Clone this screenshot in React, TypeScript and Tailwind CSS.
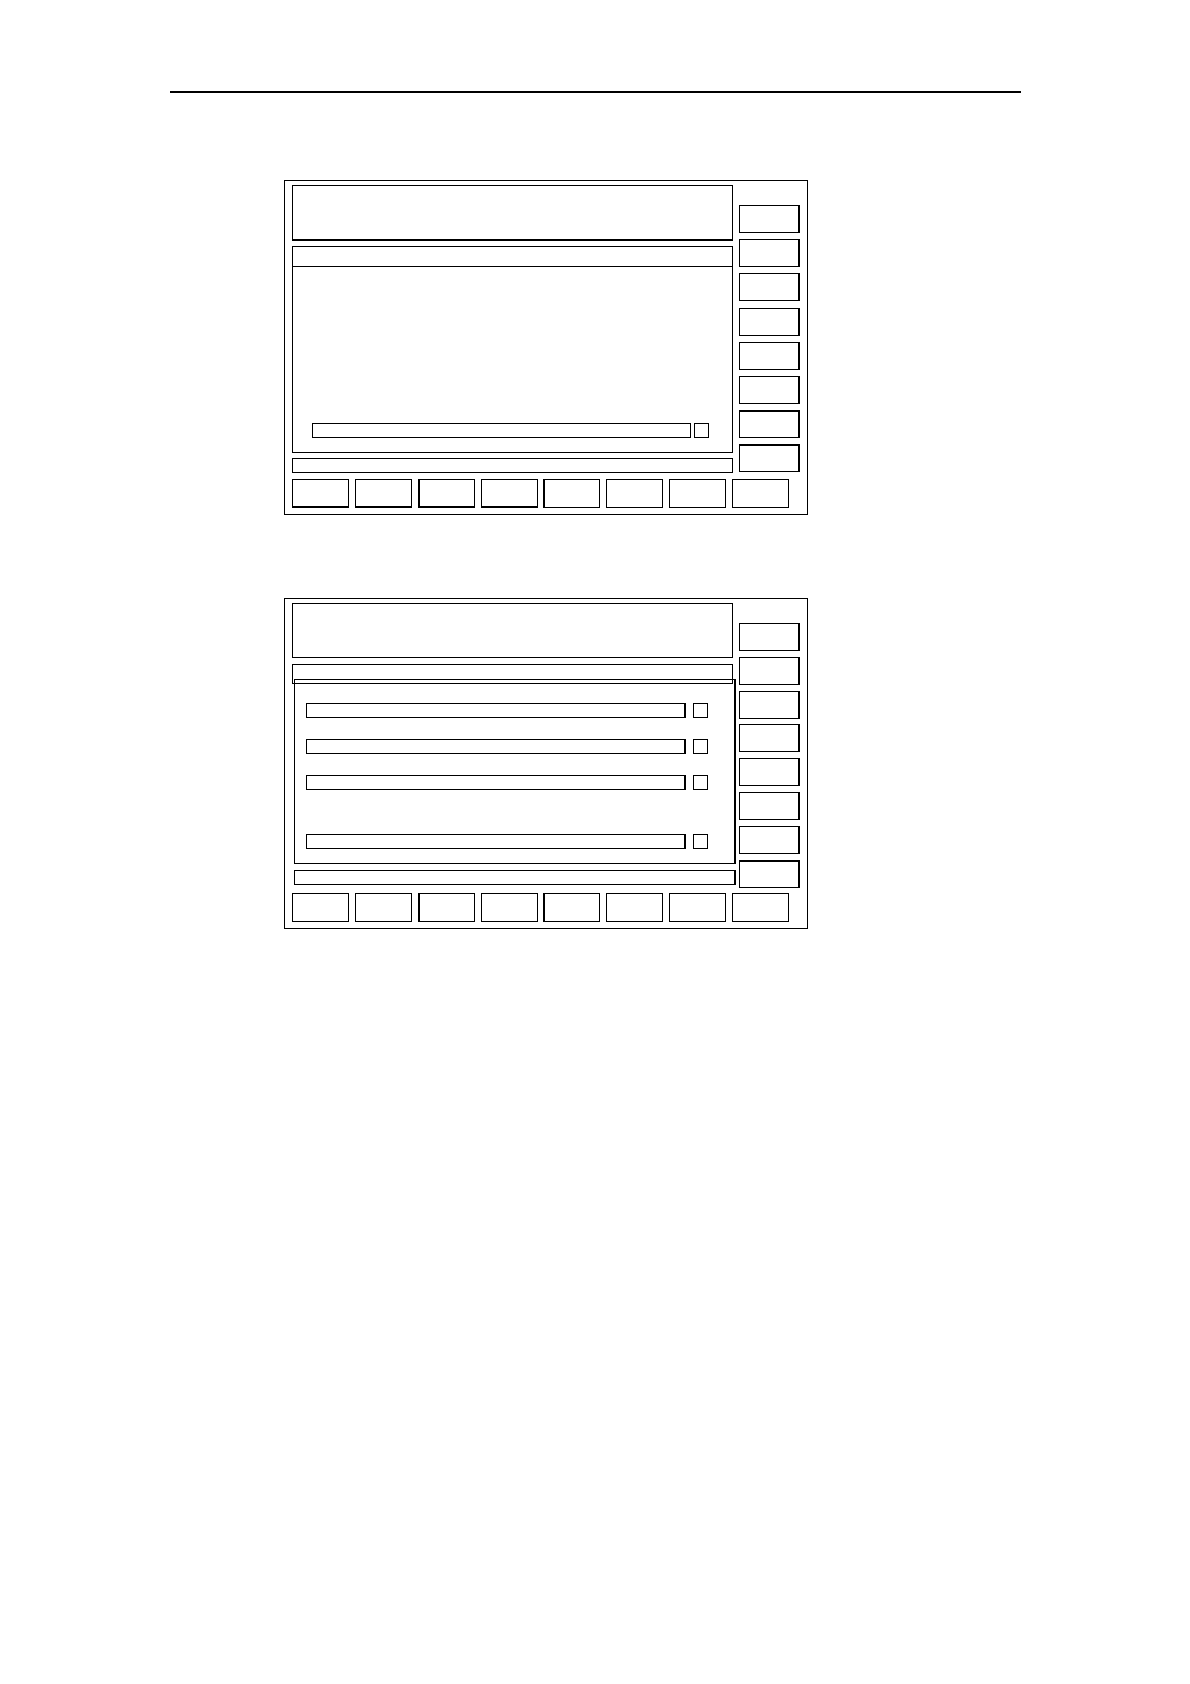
const rightBtnExtra1 = ['', '', '', '', '', '', 'border-t-2', 'border-t-2'];
const bottomBtnExtra1 = ['border-b-2', 'border-b-2', 'border-l-2 border-b-2', 'border-b-2', 'border-l-2', '', '', ''];
const bottomBtnExtra2 = ['', '', 'border-l-2', '', 'border-l-2', '', '', ''];

function RightButtons({ extra, gap }: { extra: string[]; gap: string }) {
  return (
    <div className={`mt-[20px] flex w-[61px] flex-col ${gap}`}>
      {extra.map((x, i) => (
        <div key={i} className={`h-[28px] w-[61px] border border-r-2 border-black ${x}`} />
      ))}
    </div>
  );
}

function BottomButtons({ extra, className }: { extra: string[]; className: string }) {
  return (
    <div className={`flex gap-[5.85px] ${className}`}>
      {extra.map((x, i) => (
        <div key={i} className={`h-[29px] w-[57px] border border-black ${x}`} />
      ))}
    </div>
  );
}

function Slot({ gap }: { gap: string }) {
  return (
    <div className={`ml-[11px] flex items-center gap-[7px] ${gap}`}>
      <div className="h-[15px] w-[380px] border border-r-2 border-black" />
      <div className="h-[15px] w-[15px] border border-black" />
    </div>
  );
}

function PanelOne() {
  return (
    <div className="ml-[284px] mt-[87.5px] h-[335px] w-[524px] border border-black pl-[7px] pt-[4px]">
      <div className="flex items-start gap-[6px]">
        <div className="flex w-[441px] flex-col">
          <div className="h-[56px] border border-b-2 border-black" />
          <div className="mt-[5px] flex h-[207px] flex-col border border-black">
            <div className="h-[20px] border-b border-black" />
            <div className="flex flex-1 items-end pb-[14px] pl-[19px]">
              <div className="flex items-center gap-[3px]">
                <div className="h-[15px] w-[379px] border border-black" />
                <div className="h-[15px] w-[15px] border border-black" />
              </div>
            </div>
          </div>
          <div className="mt-[5px] h-[15px] border border-black" />
        </div>
        <RightButtons extra={rightBtnExtra1} gap="gap-[6.2px]" />
      </div>
      <BottomButtons extra={bottomBtnExtra1} className="mt-[6px]" />
    </div>
  );
}

function PanelTwo() {
  return (
    <div className="ml-[284px] mt-[83px] h-[331px] w-[524px] border border-black pl-[7px] pt-[4px]">
      <div className="flex items-start gap-[6px]">
        <div className="flex w-[441px] flex-col">
          <div className="h-[55px] border border-black" />
          <div className="mt-[6px] h-[20px] border border-black" />
          <div className="relative z-10 -mt-[5px] ml-[2px] h-[185px] w-[442px] border border-r-2 border-black pt-[23px]">
            <Slot gap="" />
            <Slot gap="mt-[21px]" />
            <Slot gap="mt-[21px]" />
            <Slot gap="mt-[44px]" />
          </div>
          <div className="ml-[2px] mt-[6px] h-[15px] w-[442px] border border-r-2 border-black" />
        </div>
        <RightButtons extra={['', '', '', '', '', '', '', 'border-t-2']} gap="gap-[5.8px]" />
      </div>
      <BottomButtons extra={bottomBtnExtra2} className="mt-[5.4px]" />
    </div>
  );
}

export default function App() {
  return (
    <div className="min-h-[1684px] w-[1190px] bg-white pt-[91px]">
      <div className="ml-[170px] h-[1.5px] w-[851px] bg-black" />
      <PanelOne />
      <PanelTwo />
    </div>
  );
}
